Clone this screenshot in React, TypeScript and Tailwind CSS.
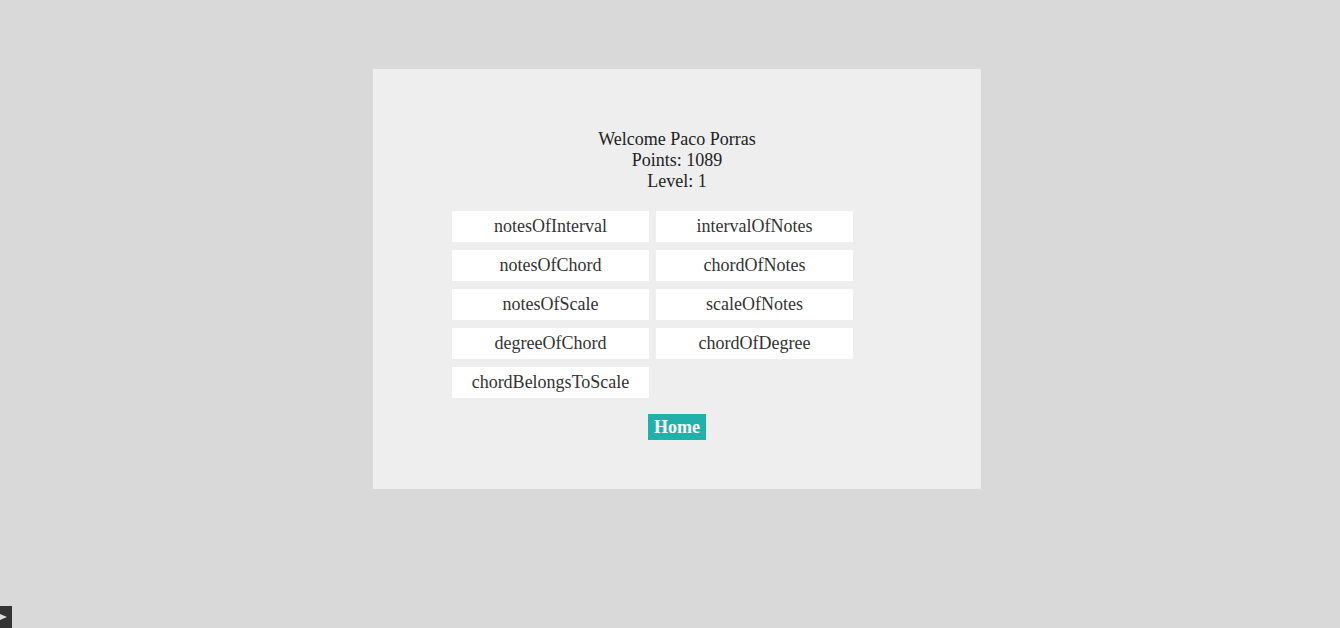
import React from "react";

const games = [
  "notesOfInterval",
  "intervalOfNotes",
  "notesOfChord",
  "chordOfNotes",
  "notesOfScale",
  "scaleOfNotes",
  "degreeOfChord",
  "chordOfDegree",
  "chordBelongsToScale",
];

export default function App() {
  return (
    <div className="relative h-[628px] w-full overflow-hidden bg-[#d9d9d9] font-['Liberation_Serif',serif] text-[18px]">
      <div className="ml-[373px] pt-[69px]">
        <div className="flex h-[420px] w-[608px] flex-col items-center bg-[#eeeeee] pt-[60px]">
          <div className="text-center leading-[21px] text-[#222222]">
            <div>Welcome Paco Porras</div>
            <div>Points: 1089</div>
            <div>Level: 1</div>
          </div>

          <div className="mt-[19px] flex w-[450px] flex-wrap gap-x-[7px] gap-y-[8px]">
            {games.map((g) => (
              <button
                key={g}
                className="h-[31px] w-[197px] bg-white text-center text-[18px] leading-[31px] text-[#333333]"
              >
                {g}
              </button>
            ))}
          </div>

          <button className="mt-[16px] h-[26px] w-[58px] bg-[#20b2aa] text-[18px] font-bold leading-[26px] text-white">
            Home
          </button>
        </div>
      </div>

      {/* little toggle in the corner */}
      <div className="absolute bottom-0 left-0 flex h-[22px] w-[12px] items-center justify-start bg-[#333333]">
        <svg width="8" height="8" viewBox="0 0 8 8">
          <path d="M0 1 L7 4 L0 7 Z" fill="#dddddd" />
        </svg>
      </div>
    </div>
  );
}
